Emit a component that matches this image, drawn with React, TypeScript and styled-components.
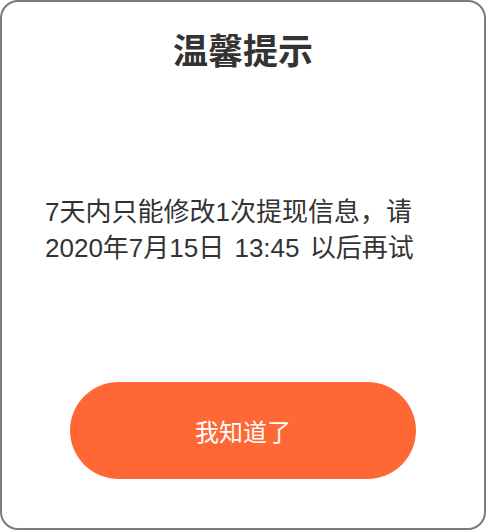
import React from "react";
import styled, { createGlobalStyle } from "styled-components";

const GlobalStyle = createGlobalStyle`
  html, body {
    margin: 0;
    padding: 0;
    background: #ffffff;
  }
  body {
    font-family: "Liberation Sans", "Noto Sans CJK SC", sans-serif;
  }
`;

const Card = styled.div`
  box-sizing: border-box;
  width: 486px;
  height: 530px;
  border: 2px solid #7b7b7b;
  border-radius: 18px;
  background: #ffffff;
  display: flex;
  flex-direction: column;
  align-items: stretch;
`;

const Title = styled.h1`
  margin: 0;
  padding-top: 25px;
  font-size: 35px;
  line-height: 50px;
  font-weight: 700;
  color: #333333;
  text-align: center;
`;

const Message = styled.p`
  margin: 0;
  margin-top: 117px;
  padding: 0 40px 0 43px;
  font-size: 26px;
  line-height: 36px;
  color: #333333;
  word-spacing: 3px;
`;

const Footer = styled.div`
  margin-top: auto;
  padding-bottom: 49px;
  display: flex;
  justify-content: center;
`;

const Button = styled.button`
  width: 346px;
  height: 97px;
  border: none;
  border-radius: 49px;
  background: #ff6734;
  color: #ffffff;
  font-family: "Liberation Sans", "Noto Sans CJK SC", sans-serif;
  font-size: 24px;
  cursor: pointer;
`;

export default function App() {
  return (
    <>
      <GlobalStyle />
      <Card>
        <Title>温馨提示</Title>
        <Message>7天内只能修改1次提现信息，请2020年7月15日 13:45 以后再试</Message>
        <Footer>
          <Button>我知道了</Button>
        </Footer>
      </Card>
    </>
  );
}
